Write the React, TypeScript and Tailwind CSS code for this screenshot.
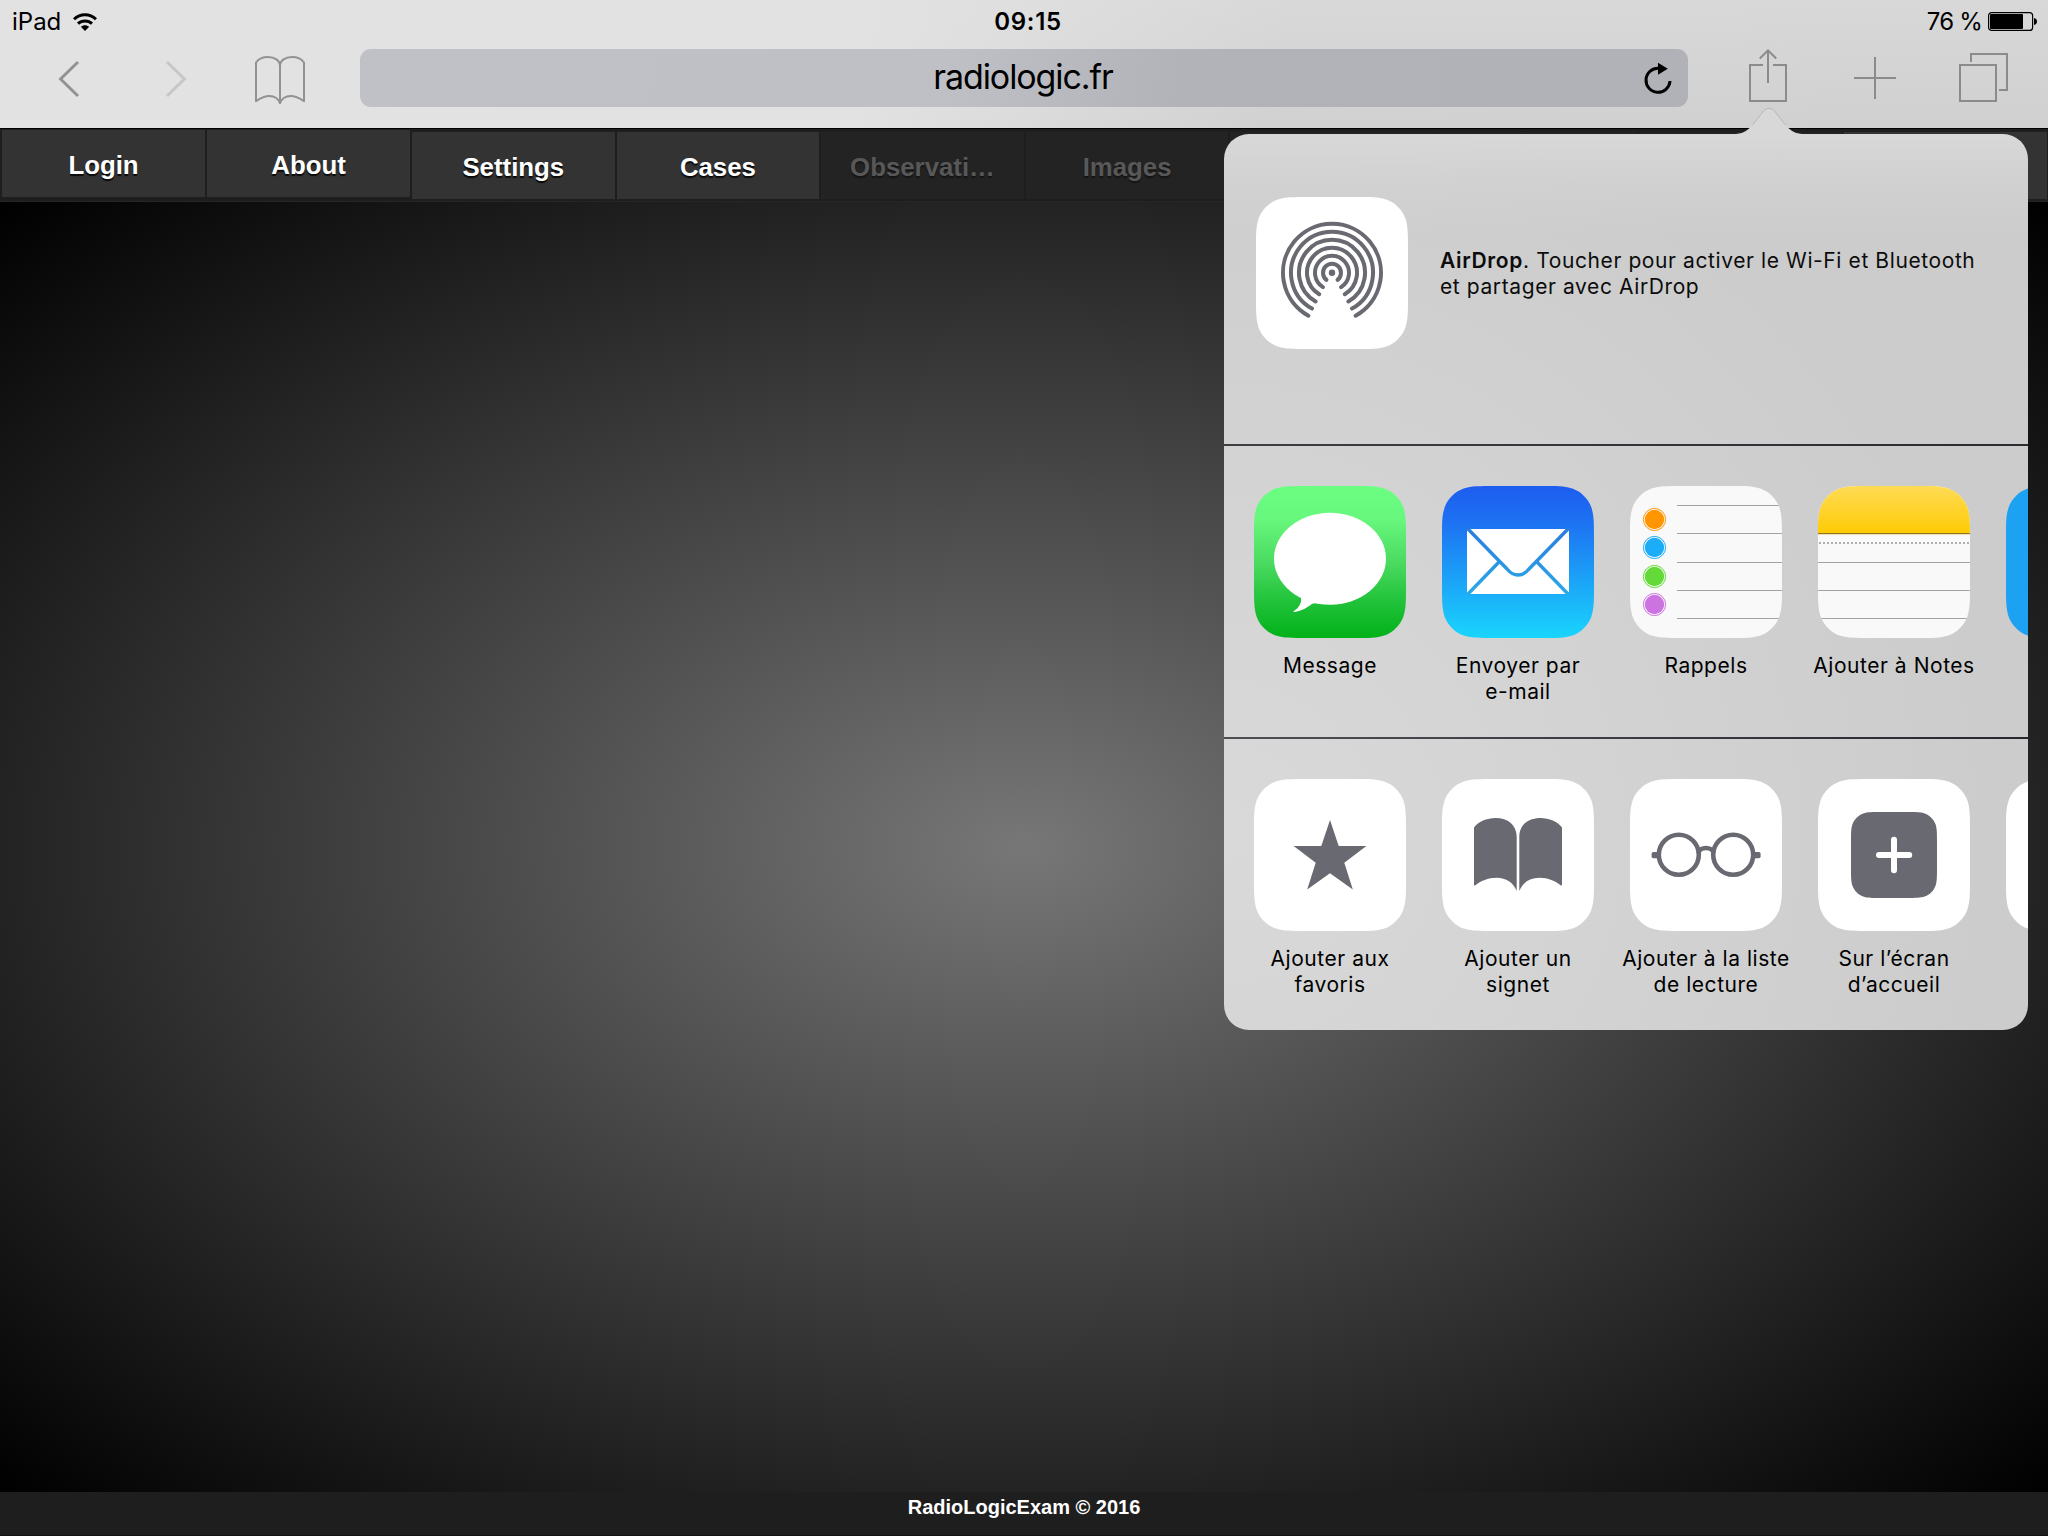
import type { ReactNode } from 'react';

const TILE =
  'M52.3 0H99.7C114.8 0 122.3 0 129.1 2.24L130.4 2.56C139.25 5.78 146.2 12.75 149.44 21.6C152 29.7 152 37.2 152 52.3V99.7C152 114.8 152 122.3 149.76 129.1L149.44 130.4C146.2 139.25 139.25 146.2 130.4 149.44C122.3 152 114.8 152 99.7 152H52.3C37.2 152 29.7 152 22.9 149.76L21.6 149.44C12.75 146.2 5.78 139.25 2.56 130.4C0 122.3 0 114.8 0 99.7V52.3C0 37.2 0 29.7 2.24 22.9L2.56 21.6C5.78 12.75 12.75 5.78 21.6 2.56C29.7 0 37.2 0 52.3 0Z';

const INK = '#696972';

function Tile({ fill = '#fff', children }: { fill?: string; children?: ReactNode }) {
  return (
    <svg width="152" height="152" viewBox="0 0 152 152" className="block shrink-0">
      <path d={TILE} fill={fill} />
      {children}
    </svg>
  );
}

/** Ring left open at the bottom; the gap is an angle measured from straight down. */
function ringPath(r: number, gap: number) {
  const a = (gap * Math.PI) / 180;
  const dx = r * Math.sin(a);
  const dy = r * Math.cos(a);
  return `M${76 - dx} ${75.8 + dy}A${r} ${r} 0 1 1 ${76 + dx} ${75.8 + dy}`;
}

function AirDropIcon() {
  const rings = [
    [49, 28.8],
    [41, 29.2],
    [33, 29.8],
    [25, 30.8],
    [17, 32.5],
    [9, 38],
  ];
  return (
    <Tile>
      <g fill="none" stroke={INK} strokeWidth="4" strokeLinecap="round">
        {rings.map(([r, gap]) => (
          <path key={r} d={ringPath(r, gap)} />
        ))}
      </g>
      <circle cx="76" cy="75.8" r="3.2" fill={INK} />
    </Tile>
  );
}

function MessageIcon() {
  return (
    <Tile fill="url(#messageBg)">
      <defs>
        <linearGradient id="messageBg" x1="0" y1="0" x2="0" y2="1">
          <stop offset="0" stopColor="#6bff82" />
          <stop offset="0.22" stopColor="#66f77c" />
          <stop offset="0.5" stopColor="#4cdb61" />
          <stop offset="0.75" stopColor="#22c33b" />
          <stop offset="1" stopColor="#02b119" />
        </linearGradient>
      </defs>
      <ellipse cx="76" cy="72.7" rx="56" ry="46" fill="#fff" />
      <path d="M44 106C48 111 48 116 45 120C43.6 122.4 41 124.4 39.8 125C39 125.8 39.8 126.2 41 126C49 124.6 54.5 120.6 57.5 118.3C59.5 117 62 117 66 117.8L70 110Z" fill="#fff" />
    </Tile>
  );
}

function MailIcon() {
  return (
    <Tile fill="url(#mailBg)">
      <defs>
        <linearGradient id="mailBg" x1="0" y1="0" x2="0" y2="152" gradientUnits="userSpaceOnUse">
          <stop offset="0" stopColor="#1d5df0" />
          <stop offset="0.25" stopColor="#1d73f2" />
          <stop offset="1" stopColor="#1ad5fd" />
        </linearGradient>
        <linearGradient id="mailLine" x1="0" y1="43" x2="0" y2="108" gradientUnits="userSpaceOnUse">
          <stop offset="0" stopColor="#2a7ddf" />
          <stop offset="1" stopColor="#2ba9e6" />
        </linearGradient>
      </defs>
      <rect x="25" y="43" width="102" height="65" fill="#fff" />
      <g fill="none" stroke="url(#mailLine)" strokeWidth="3.4">
        <path d="M25.5 42.500L65.500 83.500C71.500 90.800 80.500 90.800 86.500 83.500L126.500 42.500" />
        <path d="M25.5 108.5L57 76M126.5 108.5L95 76" />
      </g>
    </Tile>
  );
}

function RemindersIcon() {
  const dots: [number, string][] = [
    [33.5, '#ff9500'],
    [61.5, '#1badf8'],
    [90.5, '#63da38'],
    [118.5, '#cc73e1'],
  ];
  return (
    <Tile fill="#f9f9f9">
      <clipPath id="remindersClip">
        <path d={TILE} />
      </clipPath>
      <path clipPath="url(#remindersClip)" d="M47 19.5H152M47 47.5H152M47 76.5H152M47 104.5H152M47 132.5H152" stroke="#a3a3a3" strokeWidth="1" />
      {dots.map(([cy, color]) => (
        <g key={cy}>
          <circle cx="24.5" cy={cy} r="9.7" fill={color} />
          <circle cx="24.5" cy={cy} r="11.1" fill="none" stroke={color} strokeWidth="1" />
        </g>
      ))}
    </Tile>
  );
}

function NotesIcon() {
  return (
    <Tile fill="#f9f9f9">
      <defs>
        <linearGradient id="notesTop" x1="0" y1="0" x2="0" y2="1">
          <stop offset="0" stopColor="#ffdb55" />
          <stop offset="1" stopColor="#fecb05" />
        </linearGradient>
        <clipPath id="notesClip">
          <path d={TILE} />
        </clipPath>
      </defs>
      <g clipPath="url(#notesClip)">
        <rect width="152" height="47" fill="url(#notesTop)" />
        <rect y="47" width="152" height="1" fill="#8b762a" />
        <rect y="48" width="152" height="1" fill="#f3dfae" />
        <path d="M1 57H152" stroke="#b0b0b0" strokeWidth="2" strokeDasharray="2 2" />
        <path d="M0 76.5H152M0 104.5H152M0 132.5H152" stroke="#a3a3a3" />
      </g>
    </Tile>
  );
}

function StarIcon() {
  return (
    <Tile>
      <path d="M76 41L84.7 67H112.4L90.3 83.7L98.8 110.4L76 94.3L53.2 110.4L61.7 83.7L39.6 67H67.3Z" fill={INK} />
    </Tile>
  );
}

function BookmarkIcon() {
  return (
    <Tile>
      <g fill={INK}>
        <path d="M32 48.6C36 42.6 45 39 53.5 39C66 39 74.7 46 74.7 58V112C71.5 103.5 64 98.7 54.7 98.7C46 98.7 38.5 102 33.4 106.3C32.6 106.8 32 106.4 32 105.6Z" />
        <path d="M120 48.6C116 42.6 107 39 98.5 39C86 39 77.3 46 77.3 58V112C80.5 103.5 88 98.7 97.3 98.7C106 98.7 113.5 102 118.6 106.3C119.4 106.8 120 106.4 120 105.6Z" />
      </g>
    </Tile>
  );
}

function GlassesIcon() {
  return (
    <Tile>
      <g fill="none" stroke={INK} strokeWidth="4.6">
        <circle cx="48.8" cy="75.7" r="20" />
        <circle cx="103.2" cy="75.7" r="20" />
        <path d="M68.5 74.200C69.5 67.200 82.500 67.200 83.500 74.200" />
      </g>
      <rect x="21.6" y="73" width="8" height="6.2" rx="1.8" fill={INK} />
      <rect x="122.6" y="73" width="8" height="6.2" rx="1.8" fill={INK} />
    </Tile>
  );
}

function HomeScreenIcon() {
  return (
    <Tile>
      <path d={TILE} transform="translate(33 33) scale(0.5658)" fill={INK} />
      <path d="M61 76H91.2M76 60.8V91.2" stroke="#fff" strokeWidth="6" strokeLinecap="round" />
    </Tile>
  );
}

function Action({ icon, lines }: { icon: ReactNode; lines: string[] }) {
  return (
    <div className="flex w-[188px] shrink-0 flex-col items-center">
      {icon}
      <div className="mt-[15px] text-center text-[21px] leading-[26px] tracking-[0.54px] whitespace-nowrap text-black">
        {lines.map((line) => (
          <div key={line}>{line}</div>
        ))}
      </div>
    </div>
  );
}

function ShareSheet() {
  return (
    <div className="absolute top-[134px] left-[1224px] h-[896px] w-[804px]">
      <svg width="72" height="27" viewBox="0 0 72 27" className="absolute -top-[26px] left-[509px]">
        <path d="M0 27V26C9 26 14 23.5 19 17.5L29 5C31 2.3 33 0 36 0C39 0 41 2.3 43 5L53 17.5C58 23.5 63 26 72 26V27Z" fill="#d8d8d8" />
        <path d="M19.5 17L29 5C31 2.3 33 0.3 36 0.3C39 0.3 41 2.3 43 5L52.5 17" fill="none" stroke="#a4a4a4" strokeWidth="0.6" />
      </svg>
      <div className="flex h-full flex-col overflow-hidden rounded-[25px] bg-[#cccccc] bg-[linear-gradient(to_bottom,rgba(216,216,216,1)_0px,rgba(216,216,216,0.4)_45px,rgba(216,216,216,0)_100px),radial-gradient(ellipse_780px_760px_at_0%_78%,#d9d9d9_0%,#d4d4d4_40%,rgba(204,204,204,0)_100%)]">
        <section className="flex h-[310px] shrink-0 items-start px-8 pt-[63px]">
          <AirDropIcon />
          <p className="mt-[51px] ml-8 text-[21px] leading-[26px] tracking-[0.6px] whitespace-nowrap text-[#0c0c0c]">
            <span className="font-semibold tracking-[0.66px]">AirDrop</span>. Toucher pour activer le Wi-Fi et Bluetooth
            <br />
            et partager avec AirDrop
          </p>
        </section>
        <div className="h-0.5 shrink-0 bg-[linear-gradient(to_right,#3d3e42,#2b2c30)]" />
        <section className="flex h-[291px] shrink-0 pt-10 pl-3">
          <Action icon={<MessageIcon />} lines={['Message']} />
          <Action icon={<MailIcon />} lines={['Envoyer par', 'e-mail']} />
          <Action icon={<RemindersIcon />} lines={['Rappels']} />
          <Action icon={<NotesIcon />} lines={['Ajouter à Notes']} />
          <Action icon={<Tile fill="#1da1f2" />} lines={[]} />
        </section>
        <div className="h-0.5 shrink-0 bg-[linear-gradient(to_right,#4d4f53,#26282d)]" />
        <section className="flex flex-1 pt-10 pl-3">
          <Action icon={<StarIcon />} lines={['Ajouter aux', 'favoris']} />
          <Action icon={<BookmarkIcon />} lines={['Ajouter un', 'signet']} />
          <Action icon={<GlassesIcon />} lines={['Ajouter à la liste', 'de lecture']} />
          <Action icon={<HomeScreenIcon />} lines={['Sur l’écran', 'd’accueil']} />
          <Action icon={<Tile />} lines={[]} />
        </section>
      </div>
    </div>
  );
}

function StatusBar() {
  return (
    <div className="grid h-10 grid-cols-3 items-center pt-0.5 text-[24px] leading-10 text-black">
      <div className="flex items-center pl-3">
        <span>iPad</span>
        <svg width="24" height="18" viewBox="0 0 24 18" className="mb-px ml-3">
          <g fill="none" stroke="#000" strokeWidth="3">
            <path d="M1 6.3C7.2 0.2 16.8 0.2 23 6.3" />
            <path d="M5 10.7C9 7 15 7 19 10.7" />
          </g>
          <path d="M12 18L7.8 13.8C10.2 11.7 13.8 11.7 16.2 13.8Z" fill="#000" />
        </svg>
      </div>
      <div className="pl-2 text-center font-semibold tracking-[0.7px]">09:15</div>
      <div className="flex items-center justify-end pr-[11px]">
        <span className="tracking-[-0.8px]">76 %</span>
        <svg width="49" height="19" viewBox="0 0 49 19" className="mb-px ml-1.5">
          <rect x="0.6" y="0.6" width="44" height="17.8" rx="3" fill="none" stroke="#000" strokeWidth="1.2" />
          <rect x="2" y="2" width="33" height="15" rx="1" fill="#000" />
          <path d="M46 6C50 6.6 50 12.4 46 13Z" fill="#000" />
        </svg>
      </div>
    </div>
  );
}

function Toolbar() {
  return (
    <div className="flex h-[88px]">
      <svg width="360" height="88" viewBox="0 40 360 88" fill="none" className="shrink-0">
        <path d="M78 62L60.6 79L78 96" stroke="#929292" strokeWidth="3" />
        <path d="M167 62L184.4 79L167 96" stroke="#c6c6c6" strokeWidth="3" />
        <g stroke="#929292" strokeWidth="2" strokeLinejoin="round">
          <path d="M280 66V103C278 98.5 274 96 269.5 96C264.5 96 260 98.5 256 101.2V62.5C258.5 59 263 57 268 57C274.5 57 280 60.5 280 66Z" />
          <path d="M280 66V103C282 98.5 286 96 290.5 96C295.5 96 300 98.5 304 101.2V62.5C301.5 59 297 57 292 57C285.5 57 280 60.5 280 66Z" />
        </g>
      </svg>
      <div className="mt-[9px] flex h-[58px] w-[1328px] shrink-0 items-center rounded-[11px] bg-[linear-gradient(100deg,#c0c1c6_0%,#bfc0c5_44%,#b2b3b8_62%,#b1b2b7_100%)] pr-[15px]">
        <div className="flex-1 pb-[3px] pl-[43px] text-center text-[34px] tracking-[-1.09px] text-black">radiologic.fr</div>
        <svg width="30" height="34" viewBox="1643 60 30 34">
          <path d="M1670 80A12 12 0 1 1 1659 67.3" fill="none" stroke="#000" strokeWidth="3" />
          <path d="M1658 61.8L1667.8 67.8L1658 73.7Z" fill="#000" />
        </svg>
      </div>
      <svg width="360" height="88" viewBox="1688 40 360 88" fill="none" stroke="#8b8b8b" strokeWidth="2" className="shrink-0">
        <path d="M1763 65H1750V101H1786V65H1773" />
        <path d="M1768 83V51M1759.8 58.5L1768 50.3L1776.2 58.5" />
        <path d="M1875 57V99M1854 78H1896" />
        <path d="M1960 65H1996V101H1960ZM1971 62V54H2007V90H1999" />
      </svg>
    </div>
  );
}

function NavBar() {
  const raised = ['Login', 'About'];
  const tabs: { label: string; active: boolean }[] = [
    { label: 'Settings', active: true },
    { label: 'Cases', active: true },
    { label: 'Observati…', active: false },
    { label: 'Images', active: false },
    { label: '', active: false },
    { label: '', active: false },
    { label: '', active: false },
    { label: '', active: true },
  ];
  return (
    <nav className="flex h-[74px] border-t border-b border-t-black border-b-[#262626] bg-[#1e1e1e] pl-0.5 font-['Liberation_Sans',Arial,sans-serif] text-[25.8px] font-bold text-white">
      {raised.map((label) => (
        <div key={label} className="mt-px mr-0.5 flex h-[67px] w-[203px] shrink-0 items-center justify-center bg-[#333] pt-[3px] [text-shadow:0_2px_1px_#0a0a0a]">
          {label}
        </div>
      ))}
      {tabs.map(({ label, active }, i) => (
        <div
          key={i}
          className={
            active
              ? 'mt-[3px] mr-0.5 flex h-[67px] w-[202.6px] shrink-0 items-center justify-center bg-[#333] pt-[3px] [text-shadow:0_2px_1px_#0a0a0a]'
              : 'mt-[3px] mr-0.5 flex h-[67px] w-[202.6px] shrink-0 items-center justify-center bg-[#232323] pt-[3px] text-[#585858] [text-shadow:0_2px_1px_#151515]'
          }
        >
          {label}
        </div>
      ))}
    </nav>
  );
}

export default function App() {
  return (
    <div className="relative flex h-[1536px] w-[2048px] flex-col overflow-hidden bg-black font-['Inter',sans-serif]">
      <header className="h-[128px] shrink-0 bg-[linear-gradient(to_bottom,rgba(226,226,226,0.45),rgba(226,226,226,0)),linear-gradient(100deg,#e2e2e2_0%,#e2e2e2_42%,#d1d1d1_62%,#d0d0d0_100%)]">
        <StatusBar />
        <Toolbar />
      </header>
      <NavBar />
      <main className="flex-1 bg-[radial-gradient(ellipse_farthest-corner_at_center,#777_0%,#000_100%)]" />
      <footer className="h-11 shrink-0 border-b border-[#171113] bg-[#1e1e1e] text-center font-['Liberation_Sans',Arial,sans-serif] text-[20px] leading-[30px] font-bold text-white">
        RadioLogicExam © 2016
      </footer>
      <ShareSheet />
    </div>
  );
}
